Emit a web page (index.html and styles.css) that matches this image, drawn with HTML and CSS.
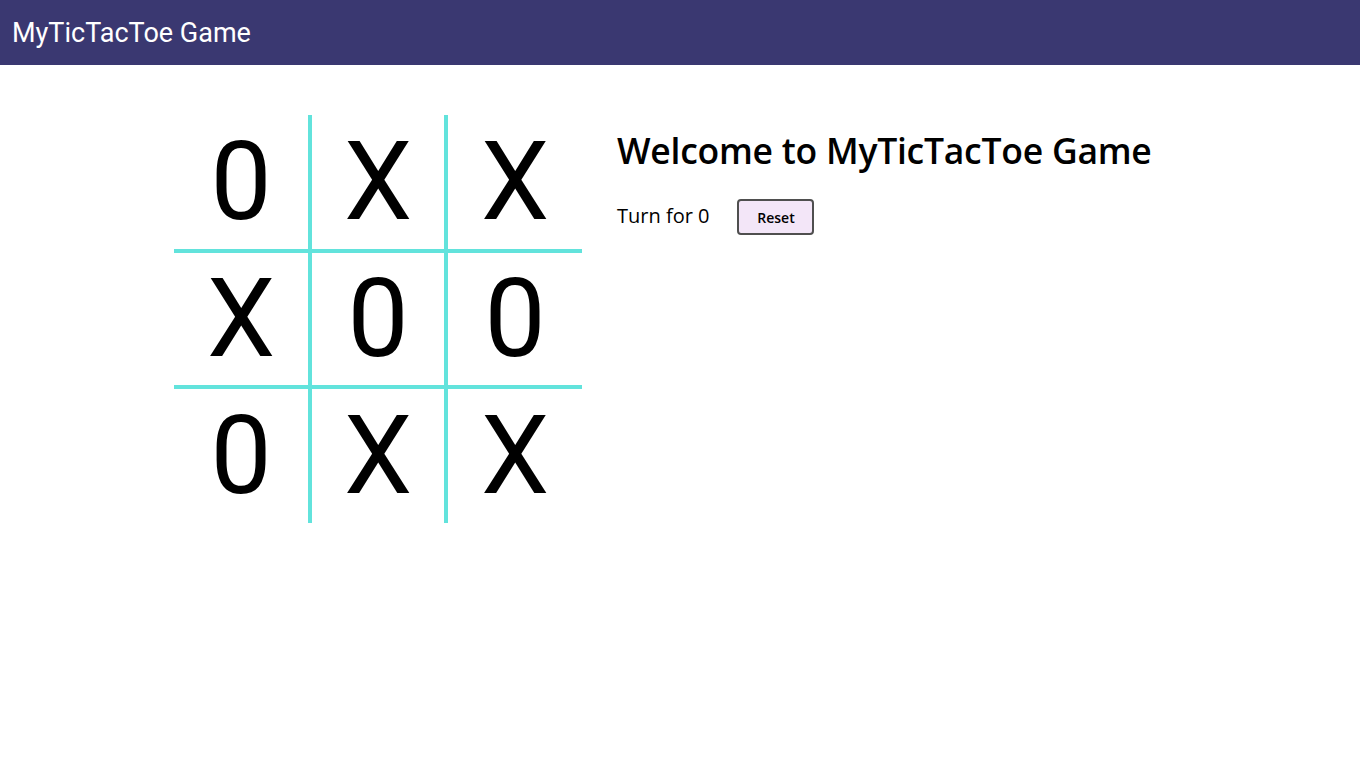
FILE: index.html
```html
<!DOCTYPE html>
<html lang="en">
<head>
<meta charset="UTF-8">
<title>MyTicTacToe Game</title>
<link rel="stylesheet" href="styles.css">
</head>
<body>
<nav class="navbar">
  <span class="brand">MyTicTacToe Game</span>
</nav>
<main class="game-container">
  <div class="board">
    <div class="box b-tl"><span class="mark">0</span></div>
    <div class="box b-tc"><span class="mark">X</span></div>
    <div class="box b-tr"><span class="mark">X</span></div>
    <div class="box b-ml"><span class="mark">X</span></div>
    <div class="box b-mc"><span class="mark">0</span></div>
    <div class="box b-mr"><span class="mark">0</span></div>
    <div class="box b-bl"><span class="mark">0</span></div>
    <div class="box b-bc"><span class="mark">X</span></div>
    <div class="box b-br"><span class="mark">X</span></div>
  </div>
  <section class="game-info">
    <h1 class="title">Welcome to MyTicTacToe Game</h1>
    <div class="turn-row">
      <span class="turn">Turn for 0</span>
      <button class="reset">Reset</button>
    </div>
  </section>
</main>
</body>
</html>
```
FILE: styles.css
```css
html, body {
  margin: 0;
  padding: 0;
  background: #ffffff;
}

.navbar {
  height: 65px;
  background: #3a3871;
  display: flex;
  align-items: center;
  padding-left: 12px;
}

.brand {
  font-family: Roboto, "Liberation Sans", sans-serif;
  font-size: 27px;
  color: #ffffff;
}

.game-container {
  display: flex;
  justify-content: center;
  margin-top: 50px;
}

.board {
  display: grid;
  grid-template-columns: repeat(3, 136px);
  grid-template-rows: repeat(3, 136px);
  font-family: Roboto, "Liberation Sans", sans-serif;
}

.box {
  border: 2px solid #62e3dc;
  display: flex;
  align-items: center;
  justify-content: center;
  font-size: 108.8px;
  color: #000;
}

.b-tl, .b-tc, .b-tr { border-top: 0; }
.b-bl, .b-bc, .b-br { border-bottom: 0; }
.b-tl, .b-ml, .b-bl { border-left: 0; }
.b-tr, .b-mr, .b-br { border-right: 0; }

.mark {
  line-height: 1;
}

.game-info {
  width: 536px;
  padding: 0 34px;
  font-family: "Open Sans", "Noto Sans", sans-serif;
  color: #000;
}

.title {
  margin: 12px 0 26px;
  padding-left: 1px;
  font-size: 35.5px;
  font-weight: 550;
  line-height: 1.3;
  white-space: nowrap;
  letter-spacing: -0.25px;
}

.turn-row {
  display: flex;
  align-items: center;
  padding-left: 1px;
}

.turn {
  font-size: 20px;
  margin-top: -4px;
}

.reset {
  margin-left: 28px;
  width: 77px;
  height: 36px;
  box-sizing: border-box;
  background: #f3e6f8;
  border: 2px solid #4f4f4f;
  border-radius: 4px;
  font-family: "Open Sans", "Noto Sans", sans-serif;
  font-size: 14px;
  font-weight: 600;
  color: #000;
  padding: 0;
}
```
